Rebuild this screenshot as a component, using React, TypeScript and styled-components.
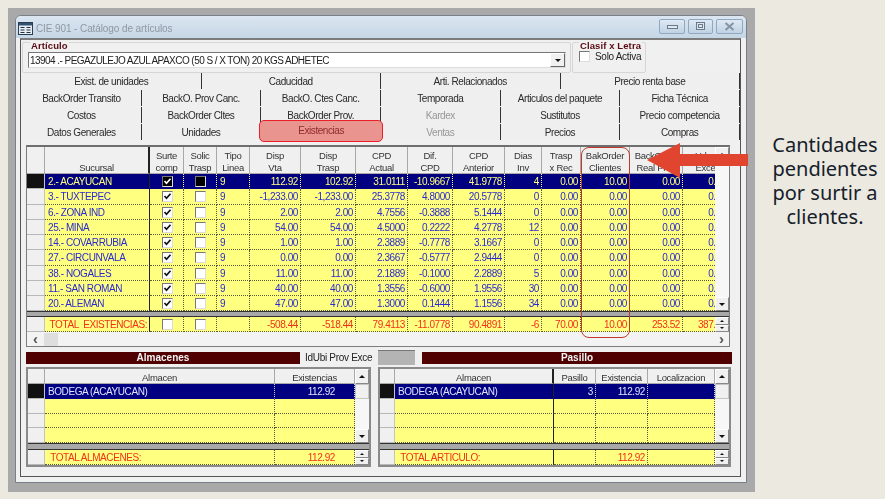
import React from "react";
import styled, { createGlobalStyle } from "styled-components";

const Global = createGlobalStyle`
  html, body { margin: 0; padding: 0; background: #ece9e1; }
  body { font-family: "Liberation Sans", Arial, sans-serif; }
  * { box-sizing: border-box; }
`;

const Page = styled.div`
  position: relative;
  width: 885px;
  height: 499px;
  overflow: hidden;
  display: flex;
  align-items: flex-start;
  padding: 8px 0 0 8px;
  background: #ece9e1;
`;

const Shot = styled.div`
  width: 747px;
  height: 484px;
  padding: 7px 8px 9px 7px;
  background: #a9a9a9;
  flex: none;
`;

const Win = styled.div`
  height: 468px;
  display: flex;
  flex-direction: column;
  border: 1px solid #77808a;
  border-radius: 6px 6px 0 0;
  background: #f0f0f0;
  padding: 0 5px 5px 4px;
  filter: blur(0.4px);
  font-size: 9.5px;
  letter-spacing: -0.3px;
  color: #222;
`;

const TitleBar = styled.div`
  height: 22px;
  margin: 0 -5px 0 -4px;
  padding: 2px 3px 0 2px;
  display: flex;
  align-items: center;
  gap: 3px;
  background: linear-gradient(#dbe6f1, #c5d6e6);
  border-radius: 5px 5px 0 0;
  flex: none;
`;

const TitleText = styled.span`
  flex: 1;
  font-size: 10px;
  letter-spacing: -0.1px;
  color: #8e98a2;
`;

const WinButton = styled.div<{ $w: number }>`
  width: ${(p) => p.$w}px;
  height: 15px;
  margin-top: -3px;
  display: flex;
  align-items: center;
  justify-content: center;
  border: 1px solid #8fa8c0;
  border-radius: 2px;
  background: linear-gradient(#dfe9f3, #bfd2e4);
`;

const WinButtons = styled.div`
  display: flex;
  gap: 3px;
`;

const Client = styled.div`
  flex: 1;
  display: flex;
  flex-direction: column;
  border: 1px solid #555;
  border-top: 2px solid #7c7c7c;
  background: #f0f0f0;
  min-height: 0;
`;

const TopRow = styled.div`
  height: 33px;
  display: flex;
  gap: 1px;
  padding: 2px 0 0 1px;
  flex: none;
`;

const GroupBox = styled.div<{ $w: number }>`
  position: relative;
  width: ${(p) => p.$w}px;
  height: 31px;
  border: 1px solid #d6d6d6;
  border-radius: 2px;
  padding: 9px 4px 0 5px;
`;

const Legend = styled.span<{ $x: number }>`
  position: absolute;
  top: -3px;
  left: ${(p) => p.$x}px;
  padding: 0 1px;
  background: #f0f0f0;
  color: #5a0a12;
  font-weight: 700;
  font-size: 9.5px;
  letter-spacing: 0.1px;
`;

const Combo = styled.div`
  height: 16px;
  display: flex;
  align-items: center;
  justify-content: space-between;
  background: #fff;
  border: 1px solid;
  border-color: #777 #ddd #ddd #777;
  padding-left: 1px;
  font-size: 10px;
  letter-spacing: -0.55px;
  color: #222;
`;

const Arrow = styled.span<{ $dir: "up" | "down" }>`
  width: 0;
  height: 0;
  border-left: 3px solid transparent;
  border-right: 3px solid transparent;
  ${(p) =>
    p.$dir === "up"
      ? "border-bottom: 3px solid #111;"
      : "border-top: 3px solid #111;"}
`;

const ComboButton = styled.div`
  width: 15px;
  height: 14px;
  display: flex;
  align-items: center;
  justify-content: center;
  background: #f0f0f0;
  border: 1px solid;
  border-color: #fff #666 #666 #fff;
`;

const SoloRow = styled.div`
  display: flex;
  align-items: center;
  gap: 5px;
  padding: 0 0 0 1px;
  margin-top: -1px;
  font-size: 10px;
  letter-spacing: -0.3px;
  white-space: nowrap;
`;

const Tabs = styled.div`
  padding: 0 0 0 1px;
  flex: none;
`;

const TabRow = styled.div<{ $n: number }>`
  height: 17px;
  display: grid;
  grid-template-columns: repeat(${(p) => p.$n}, 1fr);
`;

const Tab = styled.div<{ $off?: boolean; $hot?: boolean }>`
  display: flex;
  align-items: center;
  justify-content: center;
  height: 16px;
  padding-top: 1px;
  position: relative;
  font-size: 10px;
  letter-spacing: -0.43px;
  background: #efefef;
  border-right: 1px solid #333;
  color: ${(p) => (p.$off ? "#979797" : "#2a2a2a")};
  ${(p) =>
    p.$hot
      ? `
    height: 22px;
    margin: -4px -2px 0 -2px;
    padding: 0 0 1px;
    background: #ea9490;
    border: 1px solid #ea1f28;
    border-radius: 5px;
    color: #8e2a2a;
    z-index: 1;
  `
      : ""}
`;

const Panel = styled.div`
  flex: 1;
  padding: 4px 0 0 5px;
  min-height: 0;
`;

const Frame = styled.div<{ $w: number }>`
  width: ${(p) => p.$w}px;
  border: 1px solid #7d7d7d;
  border-top: 2px solid #6f6f6f;
  flex: none;
`;

const UpperArea = styled.div`
  display: flex;
`;

const Clip = styled.div<{ $w: number }>`
  width: ${(p) => p.$w}px;
  overflow: hidden;
  flex: none;
`;

const Row = styled.div<{ $cols: string; $h: number }>`
  display: grid;
  grid-template-columns: ${(p) => p.$cols};
  height: ${(p) => p.$h}px;
`;

const HeadCell = styled.div<{ $thick?: boolean }>`
  display: flex;
  align-items: flex-end;
  justify-content: center;
  text-align: center;
  line-height: 11.5px;
  padding-bottom: 0;
  background: #f0f0f0;
  color: #333;
  overflow: hidden;
  white-space: pre-line;
  border-right: ${(p) => (p.$thick ? "2px solid #222" : "1px solid #a8a8a8")};
  border-bottom: 1px solid #a8a8a8;
`;

const IndCell = styled.div<{ $sel?: boolean }>`
  background: ${(p) => (p.$sel ? "#111" : "#f0f0f0")};
  border-right: 1px solid #c4c4c4;
  border-bottom: 1px solid #b8b8b8;
`;

type Tone = "plain" | "sel" | "selLight" | "total";

const toneText: Record<Tone, string> = {
  plain: "#2a2ad0",
  sel: "#ffff80",
  selLight: "#dfe4ff",
  total: "#f2301a",
};

const Cell = styled.div<{
  $tone: Tone;
  $align?: "left" | "right" | "center";
  $thick?: boolean;
  $pr?: number;
}>`
  display: flex;
  align-items: center;
  justify-content: ${(p) =>
    p.$align === "left"
      ? "flex-start"
      : p.$align === "center"
      ? "center"
      : "flex-end"};
  padding: 1px ${(p) => p.$pr ?? 2}px 0 3px;
  white-space: pre;
  overflow: hidden;
  background: ${(p) =>
    p.$tone === "sel" || p.$tone === "selLight" ? "#000080" : "#ffff80"};
  color: ${(p) => toneText[p.$tone]};
  font-size: 10px;
  letter-spacing: -0.42px;
  border-bottom: 1px dotted
    ${(p) =>
      p.$tone === "sel" || p.$tone === "selLight" ? "#000080" : "#5a5a40"};
  border-right: ${(p) =>
    p.$thick
      ? "1px solid #222"
      : p.$tone === "selLight"
      ? "1px dotted #d0d0d0"
      : p.$tone === "sel"
      ? "1px dotted #ffff80"
      : "1px dotted #5a5a40"};
`;

const Box = styled.span<{ $dark?: boolean }>`
  width: 11px;
  height: 11px;
  display: inline-flex;
  align-items: center;
  justify-content: center;
  background: ${(p) => (p.$dark ? "#000" : "#fff")};
  border: 1px solid;
  border-color: #777 #ddd #ddd #777;
  flex: none;
`;

const VScroll = styled.div<{ $h: number }>`
  width: 14px;
  height: ${(p) => p.$h}px;
  background: #f7f7f7;
  display: flex;
  flex-direction: column;
  justify-content: space-between;
  flex: none;
`;

const ScrollBtn = styled.div<{ $h?: number }>`
  height: ${(p) => p.$h ?? 14}px;
  display: flex;
  align-items: center;
  justify-content: center;
  background: #f0f0f0;
  border: 1px solid;
  border-color: #fff #888 #888 #fff;
  flex: none;
`;

const Chevron = styled.span`
  font-size: 15px;
  line-height: 12px;
  font-weight: 700;
  color: #555;
  letter-spacing: 0;
`;

const Thumb = styled.div`
  height: 15px;
  background: #f0f0f0;
  border: 1px solid #c4c4c4;
`;

const ScrollGap = styled.div`
  flex: 1;
`;

const Sep = styled.div<{ $h: number }>`
  height: ${(p) => p.$h}px;
  background: #a8a8a8;
  border-top: 1px solid #333;
  border-bottom: 1px solid #333;
`;

const TotalArea = styled.div`
  display: flex;
`;

const Spin = styled.div`
  width: 14px;
  display: flex;
  flex-direction: column;
  flex: none;
`;

const SpinBtn = styled.div`
  flex: 1;
  display: flex;
  align-items: center;
  justify-content: center;
  background: #f0f0f0;
  border: 1px solid;
  border-color: #fff #888 #888 #fff;
`;

const SmallTri = styled.span<{ $dir: "up" | "down" }>`
  width: 0;
  height: 0;
  border-left: 2px solid transparent;
  border-right: 2px solid transparent;
  ${(p) =>
    p.$dir === "up"
      ? "border-bottom: 2px solid #111;"
      : "border-top: 2px solid #111;"}
`;

const HScroll = styled.div`
  height: 14px;
  display: flex;
  align-items: center;
  justify-content: space-between;
  padding: 0 5px 0 6px;
  background: #f3f3f3;
`;

const HLeft = styled.div`
  display: flex;
  align-items: center;
  gap: 6px;
`;

const HThumb = styled.div`
  width: 14px;
  height: 13px;
  background: #dedede;
`;

const BandRow = styled.div`
  height: 15px;
  margin-top: 3px;
  display: flex;
  align-items: center;
`;

const Band = styled.div<{ $w: number }>`
  width: ${(p) => p.$w}px;
  height: 12px;
  display: flex;
  align-items: center;
  justify-content: center;
  background: #500000;
  color: #f4f4f4;
  font-weight: 700;
  font-size: 10px;
  letter-spacing: 0;
  flex: none;
`;

const BandLabel = styled.span`
  width: 78px;
  padding-left: 5px;
  font-size: 10px;
  letter-spacing: -0.3px;
  color: #222;
  flex: none;
`;

const GreyBox = styled.div`
  width: 37px;
  height: 15px;
  margin-right: 7px;
  background: #b4b4b4;
  border-top: 1px solid #777;
  flex: none;
`;

const Lower = styled.div`
  margin-top: 2px;
  display: flex;
  gap: 7px;
`;

const SubFrame = styled.div<{ $w: number }>`
  width: ${(p) => p.$w}px;
  border: 2px solid #8a8a8a;
  flex: none;
`;

const Caption = styled.div`
  width: 120px;
  margin-top: 125px;
  margin-left: 10px;
  flex: none;
  text-align: center;
  font-family: "Noto Sans", sans-serif;
  font-size: 20px;
  line-height: 24px;
  white-space: nowrap;
  color: #15202a;
`;

const ColumnMark = styled.div`
  position: absolute;
  left: 581px;
  top: 147px;
  width: 49px;
  height: 191px;
  border: 1.5px solid #c0392b;
  border-radius: 8px;
  pointer-events: none;
`;

const ArrowSvg = styled.svg`
  position: absolute;
  left: 646px;
  top: 142px;
`;

const Check = ({ on, dark }: { on?: boolean; dark?: boolean }) => (
  <Box $dark={dark}>
    {on && (
      <svg width="9" height="9" viewBox="0 0 9 9">
        <path
          d="M1.5 4l2 2.2L7.5 1.8"
          fill="none"
          stroke={dark ? "#fff" : "#111"}
          strokeWidth="1.7"
        />
      </svg>
    )}
  </Box>
);

const mainCols = [18, 105, 34, 33, 33, 51, 55, 52, 45, 52, 37, 39, 49, 53, 46];
const colStr = (c: number[]) => c.map((n) => `${n}px`).join(" ");
const mainStr = colStr(mainCols);
const leftStr = colStr([17, 230, 80]);
const rightStr = colStr([15, 159, 42, 52, 67]);

const mainHead = [
  "Sucursal",
  "Surte\ncomp",
  "Solic\nTrasp",
  "Tipo\nLinea",
  "Disp\nVta",
  "Disp\nTrasp",
  "CPD\nActual",
  "Dif.\nCPD",
  "CPD\nAnterior",
  "Dias\nInv",
  "Trasp\nx Rec",
  "BakOrder\nClientes",
  "BackOrder\nReal Prov",
  "Udso\nExce",
];

const data: string[][] = [
  ["2.- ACAYUCAN", "112.92", "102.92", "31.0111", "-10.9667", "41.9778", "4", "0.00", "10.00", "0.00", "0.00"],
  ["3.- TUXTEPEC", "-1,233.00", "-1,233.00", "25.3778", "4.8000", "20.5778", "0", "0.00", "0.00", "0.00", "0.00"],
  ["6.- ZONA IND", "2.00", "2.00", "4.7556", "-0.3888", "5.1444", "0", "0.00", "0.00", "0.00", "0.00"],
  ["25.- MINA", "54.00", "54.00", "4.5000", "0.2222", "4.2778", "12", "0.00", "0.00", "0.00", "0.00"],
  ["14.- COVARRUBIA", "1.00", "1.00", "2.3889", "-0.7778", "3.1667", "0", "0.00", "0.00", "0.00", "0.00"],
  ["27.- CIRCUNVALA", "0.00", "0.00", "2.3667", "-0.5777", "2.9444", "0", "0.00", "0.00", "0.00", "0.00"],
  ["38.- NOGALES", "11.00", "11.00", "2.1889", "-0.1000", "2.2889", "5", "0.00", "0.00", "0.00", "0.00"],
  ["11.- SAN ROMAN", "40.00", "40.00", "1.3556", "-0.6000", "1.9556", "30", "0.00", "0.00", "0.00", "0.00"],
  ["20.- ALEMAN", "47.00", "47.00", "1.3000", "0.1444", "1.1556", "34", "0.00", "0.00", "0.00", "0.00"],
];

const totals = ["-508.44", "-518.44", "79.4113", "-11.0778", "90.4891", "-6", "70.00", "10.00", "253.52", "387.72"];

const tabRows: { label: string; off?: boolean; hot?: boolean }[][] = [
  [{ label: "Exist. de unidades" }, { label: "Caducidad" }, { label: "Arti. Relacionados" }, { label: "Precio renta base" }],
  [{ label: "BackOrder Transito" }, { label: "BackO. Prov Canc." }, { label: "BackO. Ctes Canc." }, { label: "Temporada" }, { label: "Articulos del paquete" }, { label: "Ficha Técnica" }],
  [{ label: "Costos" }, { label: "BackOrder Cltes" }, { label: "BackOrder Prov." }, { label: "Kardex", off: true }, { label: "Sustitutos" }, { label: "Precio competencia" }],
  [{ label: "Datos Generales" }, { label: "Unidades" }, { label: "Existencias", hot: true }, { label: "Ventas", off: true }, { label: "Precios" }, { label: "Compras" }],
];

const SubGrid = ({
  width,
  cols,
  clip,
  heads,
  thick,
  selected,
  total,
  numPad,
}: {
  width: number;
  cols: string;
  clip: number;
  heads: string[];
  thick?: boolean;
  selected: string[];
  total: string[];
  numPad?: number;
}) => (
  <SubFrame $w={width}>
    <UpperArea>
      <Clip $w={clip}>
        <Row $cols={cols} $h={15}>
          <HeadCell />
          {heads.map((h, i) => (
            <HeadCell key={h} $thick={thick && i === 0}>
              {h}
            </HeadCell>
          ))}
        </Row>
        <Row $cols={cols} $h={14.75}>
          <IndCell $sel />
          {selected.map((v, i) => (
            <Cell key={i} $tone="selLight" $align={i === 0 ? "left" : "right"} $thick={thick && i === 0} $pr={numPad}>
              {v}
            </Cell>
          ))}
        </Row>
        {[0, 1, 2].map((r) => (
          <Row key={r} $cols={cols} $h={14.75}>
            <IndCell />
            {selected.map((_, i) => (
              <Cell key={i} $tone="plain" $thick={thick && i === 0} />
            ))}
          </Row>
        ))}
      </Clip>
      <VScroll $h={74}>
        <ScrollBtn $h={15}>
          <Arrow $dir="up" />
        </ScrollBtn>
        <Thumb />
        <ScrollGap />
        <ScrollBtn $h={14}>
          <Arrow $dir="down" />
        </ScrollBtn>
      </VScroll>
    </UpperArea>
    <Sep $h={7} />
    <TotalArea>
      <Clip $w={clip}>
        <Row $cols={cols} $h={15}>
          <IndCell />
          {total.map((v, i) => (
            <Cell key={i} $tone="total" $align={i === 0 ? "left" : "right"} $thick={thick && i === 0} $pr={numPad}>
              {v}
            </Cell>
          ))}
        </Row>
      </Clip>
      <Spin>
        <SpinBtn>
          <SmallTri $dir="up" />
        </SpinBtn>
        <SpinBtn>
          <SmallTri $dir="down" />
        </SpinBtn>
      </Spin>
    </TotalArea>
  </SubFrame>
);

export default function App() {
  return (
    <Page>
      <Global />
      <Shot>
        <Win>
          <TitleBar>
            <svg width="15" height="13" viewBox="0 0 15 13">
              <rect x="0.5" y="0.5" width="14" height="12" fill="#e8eef5" stroke="#2c3c50" />
              <rect x="1" y="1" width="13" height="2.5" fill="#33506e" />
              <path d="M2.5 5.5h4M8.5 5.5h4M2.5 8h4M8.5 8h4M2.5 10.5h4M8.5 10.5h4" stroke="#22303f" strokeWidth="1.2" />
            </svg>
            <TitleText>CIE 901 - Catálogo de artículos</TitleText>
            <WinButtons>
              <WinButton $w={26}>
                <svg width="11" height="7" viewBox="0 0 11 7">
                  <rect x="0.5" y="2.5" width="10" height="3" fill="#dfe8f0" stroke="#6a7a88" />
                </svg>
              </WinButton>
              <WinButton $w={25}>
                <svg width="9" height="9" viewBox="0 0 9 9">
                  <rect x="0.5" y="0.5" width="8" height="7" fill="#dfe8f0" stroke="#6a7a88" />
                  <rect x="2.5" y="2.5" width="4" height="3" fill="none" stroke="#6a7a88" />
                </svg>
              </WinButton>
              <WinButton $w={27}>
                <svg width="11" height="9" viewBox="0 0 11 9">
                  <path d="M1.5 1l8 7M9.5 1l-8 7" stroke="#8494a4" strokeWidth="2" />
                </svg>
              </WinButton>
            </WinButtons>
          </TitleBar>
          <Client>
            <TopRow>
              <GroupBox $w={549}>
                <Legend $x={7}>Artículo</Legend>
                <Combo>
                  13904 .- PEGAZULEJO AZUL APAXCO (50 S / X TON) 20 KGS ADHETEC
                  <ComboButton>
                    <Arrow $dir="down" />
                  </ComboButton>
                </Combo>
              </GroupBox>
              <GroupBox $w={74}>
                <Legend $x={6}>Clasif x Letra</Legend>
                <SoloRow>
                  <Check />
                  Solo Activa
                </SoloRow>
              </GroupBox>
            </TopRow>
            <Tabs>
              {tabRows.map((r, i) => (
                <TabRow key={i} $n={r.length}>
                  {r.map((t) => (
                    <Tab key={t.label} $off={t.off} $hot={t.hot}>
                      {t.label}
                    </Tab>
                  ))}
                </TabRow>
              ))}
            </Tabs>
            <Panel>
              <Frame $w={704}>
                <UpperArea>
                  <Clip $w={688}>
                    <Row $cols={mainStr} $h={27}>
                      <HeadCell />
                      {mainHead.map((h, i) => (
                        <HeadCell key={h} $thick={i === 0}>
                          {h}
                        </HeadCell>
                      ))}
                    </Row>
                    {data.map((d, r) => {
                      const tone: Tone = r === 0 ? "sel" : "plain";
                      return (
                        <Row key={d[0]} $cols={mainStr} $h={15.25}>
                          <IndCell $sel={r === 0} />
                          <Cell $tone={tone} $align="left" $thick>
                            {d[0]}
                          </Cell>
                          <Cell $tone={tone} $align="center">
                            <Check on dark={r === 0} />
                          </Cell>
                          <Cell $tone={tone} $align="center">
                            <Check dark={r === 0} />
                          </Cell>
                          <Cell $tone={tone} $align="left">
                            9
                          </Cell>
                          {d.slice(1).map((v, i) => (
                            <Cell key={i} $tone={tone}>
                              {v}
                            </Cell>
                          ))}
                        </Row>
                      );
                    })}
                  </Clip>
                  <VScroll $h={164.25}>
                    <ScrollBtn $h={15}>
                      <Arrow $dir="up" />
                    </ScrollBtn>
                    <ScrollBtn $h={14}>
                      <Arrow $dir="down" />
                    </ScrollBtn>
                  </VScroll>
                </UpperArea>
                <Sep $h={5.75} />
                <TotalArea>
                  <Clip $w={688}>
                    <Row $cols={mainStr} $h={15}>
                      <IndCell />
                      <Cell $tone="total" $thick>
                        TOTAL  EXISTENCIAS:
                      </Cell>
                      <Cell $tone="total" $align="center">
                        <Check />
                      </Cell>
                      <Cell $tone="total" $align="center">
                        <Check />
                      </Cell>
                      <Cell $tone="total" />
                      {totals.map((v, i) => (
                        <Cell key={i} $tone="total">
                          {v}
                        </Cell>
                      ))}
                    </Row>
                  </Clip>
                  <Spin>
                    <SpinBtn>
                      <SmallTri $dir="up" />
                    </SpinBtn>
                    <SpinBtn>
                      <SmallTri $dir="down" />
                    </SpinBtn>
                  </Spin>
                </TotalArea>
                <HScroll>
                  <HLeft>
                    <Chevron>‹</Chevron>
                    <HThumb />
                  </HLeft>
                  <Chevron>›</Chevron>
                </HScroll>
              </Frame>
              <BandRow>
                <Band $w={274}>Almacenes</Band>
                <BandLabel>IdUbi Prov Exce</BandLabel>
                <GreyBox />
                <Band $w={310}>Pasillo</Band>
              </BandRow>
              <Lower>
                <SubGrid
                  width={345}
                  cols={leftStr}
                  clip={327}
                  numPad={19}
                  heads={["Almacen", "Existencias"]}
                  selected={["BODEGA (ACAYUCAN)", "112.92"]}
                  total={[" TOTAL ALMACENES:", "112.92"]}
                />
                <SubGrid
                  width={353}
                  cols={rightStr}
                  clip={335}
                  thick
                  heads={["Almacen", "Pasillo", "Existencia", "Localizacion"]}
                  selected={["BODEGA (ACAYUCAN)", "3", "112.92", ""]}
                  total={[" TOTAL ARTICULO:", "", "112.92", ""]}
                />
              </Lower>
            </Panel>
          </Client>
        </Win>
      </Shot>
      <Caption>
        Cantidades
        <br />
        pendientes
        <br />
        por surtir a
        <br />
        clientes.
      </Caption>
      <ColumnMark />
      <ArrowSvg width="104" height="37" viewBox="0 0 104 37">
        <path d="M1 18L34 1v11h68v12H34v12z" fill="#e2452f" />
      </ArrowSvg>
    </Page>
  );
}
